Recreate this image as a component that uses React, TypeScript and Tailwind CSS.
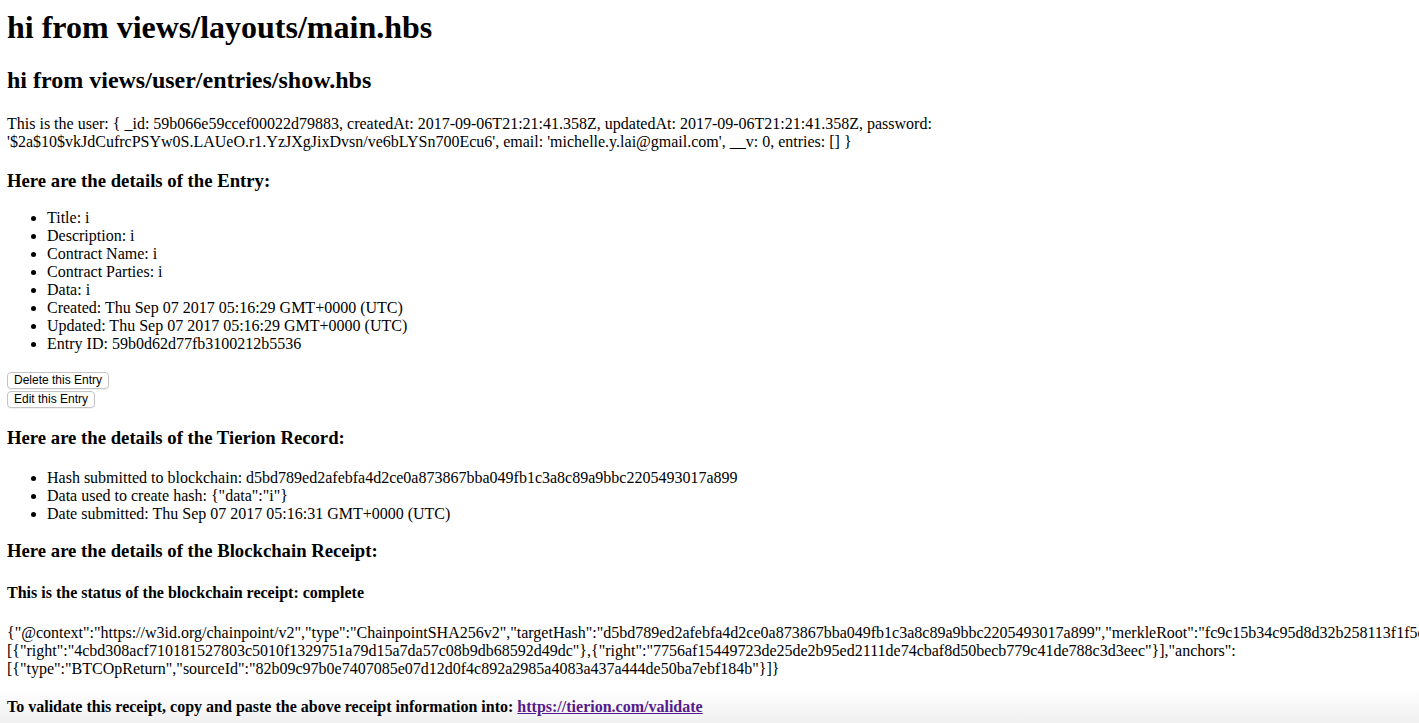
const user = {
  id: "59b066e59ccef00022d79883",
  createdAt: "2017-09-06T21:21:41.358Z",
  updatedAt: "2017-09-06T21:21:41.358Z",
  password: "$2a$10$vkJdCufrcPSYw0S.LAUeO.r1.YzJXgJixDvsn/ve6bLYSn700Ecu6",
  email: "michelle.y.lai@gmail.com",
};

const entry = [
  ["Title", "i"],
  ["Description", "i"],
  ["Contract Name", "i"],
  ["Contract Parties", "i"],
  ["Data", "i"],
  ["Created", "Thu Sep 07 2017 05:16:29 GMT+0000 (UTC)"],
  ["Updated", "Thu Sep 07 2017 05:16:29 GMT+0000 (UTC)"],
  ["Entry ID", "59b0d62d77fb3100212b5536"],
];

const record = [
  ["Hash submitted to blockchain", "d5bd789ed2afebfa4d2ce0a873867bba049fb1c3a8c89a9bbc2205493017a899"],
  ["Data used to create hash", '{"data":"i"}'],
  ["Date submitted", "Thu Sep 07 2017 05:16:31 GMT+0000 (UTC)"],
];

const receipt = [
  '{"@context":"https://w3id.org/chainpoint/v2","type":"ChainpointSHA256v2","targetHash":"d5bd789ed2afebfa4d2ce0a873867bba049fb1c3a8c89a9bbc2205493017a899","merkleRoot":"fc9c15b34c95d8d32b258113f1f5c0e2a9d41b7d8e63f0a5c2b19e4d7a803f61","proof":',
  '[{"right":"4cbd308acf710181527803c5010f1329751a79d15a7da57c08b9db68592d49dc"},{"right":"7756af15449723de25de2b95ed2111de74cbaf8d50becb779c41de788c3d3eec"}],"anchors":',
  '[{"type":"BTCOpReturn","sourceId":"82b09c97b0e7407085e07d12d0f4c892a2985a4083a437a444de50ba7ebf184b"}]}',
];

const btn =
  "h-[17px] rounded-[4px] border border-[#c4c4c4] bg-white px-[6px] font-['Liberation_Sans',Arial,sans-serif] text-[12px] leading-[15px] text-black shadow-[0_1px_0_rgba(0,0,0,0.05)]";

const App = () => {
  return (
    <div className="relative h-screen w-full overflow-hidden bg-white font-['Liberation_Serif','Times_New_Roman',serif] text-[16px] leading-[18px] text-black">
      <div className="pointer-events-none absolute bottom-0 left-0 h-[34px] w-full bg-gradient-to-b from-white to-[#f0f0f0]" />

      <div className="relative pl-[7px] pr-2">
        <h1 className="mt-[9px] text-[32px] font-bold leading-[37px]">hi from views/layouts/main.hbs</h1>
        <h2 className="mt-[20px] text-[24px] font-bold leading-[28px]">hi from views/user/entries/show.hbs</h2>

        <p className="mt-[21px]">
          This is the user: {"{"} _id: {user.id}, createdAt: {user.createdAt}, updatedAt: {user.updatedAt}, password:{" "}
          <span className="whitespace-nowrap">'{user.password}',</span> email: '{user.email}', __v: 0, entries: [] {"}"}
        </p>

        <h3 className="mt-[19px] text-[18.72px] font-bold leading-[22px]">Here are the details of the Entry:</h3>
        <ul className="mt-[17px] list-disc pl-10">
          {entry.map(([label, value]) => (
            <li key={label}>
              {label}: {value}
            </li>
          ))}
        </ul>

        <div className="mt-[19px] flex flex-col items-start gap-[2px]">
          <button className={btn}>Delete this Entry</button>
          <button className={btn}>Edit this Entry</button>
        </div>

        <h3 className="mt-[19px] text-[18.72px] font-bold leading-[22px]">Here are the details of the Tierion Record:</h3>
        <ul className="mt-[20px] list-disc pl-10">
          {record.map(([label, value]) => (
            <li key={label}>
              {label}: {value}
            </li>
          ))}
        </ul>

        <h3 className="mt-[17px] text-[18.72px] font-bold leading-[22px]">Here are the details of the Blockchain Receipt:</h3>
        <h4 className="mt-[22px] font-bold">This is the status of the blockchain receipt: complete</h4>

        <p className="mt-[22px]">
          {receipt.map((part, idx) => (
            <span key={idx}>
              <span className="whitespace-nowrap">{part}</span>
              {idx < receipt.length - 1 ? " " : ""}
            </span>
          ))}
        </p>

        <h4 className="mt-[20px] font-bold">
          To validate this receipt, copy and paste the above receipt information into:{" "}
          <a href="#" className="text-[#551a8b] underline">
            https://tierion.com/validate
          </a>
        </h4>
      </div>
    </div>
  );
};

export default App;
